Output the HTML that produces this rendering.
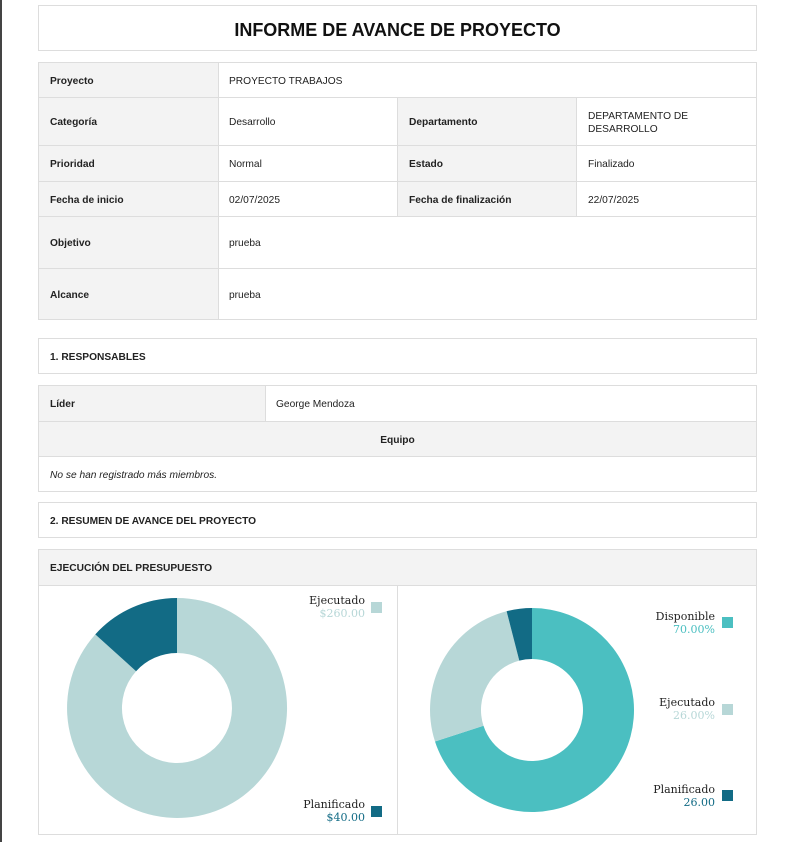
<!DOCTYPE html>
<html><head><meta charset="utf-8"><style>
*{margin:0;padding:0;box-sizing:border-box}
body{width:791px;height:842px;background:#fff;position:relative;overflow:hidden;font-family:"Liberation Sans",sans-serif;font-size:10.2px;color:#222}
.b{position:absolute;border:1px solid #ddd}
.c{position:absolute;display:flex;align-items:center;padding-left:11px;padding-top:3px;line-height:1.3}
.g{background:#f3f3f3}
.bold{font-weight:bold}
.l{position:absolute;background:#ddd}
</style></head><body>
<div style="position:absolute;left:0;top:0;width:2px;height:842px;background:#444"></div>
<div class="b" style="left:38px;top:5px;width:719px;height:46px;display:flex;align-items:center;justify-content:center;padding-top:4px;font-size:18px;font-weight:bold;color:#111">INFORME DE AVANCE DE PROYECTO</div>

<div class="b" style="left:38px;top:62px;width:719px;height:258px"></div>
<div class="c g bold" style="left:39px;top:63px;width:179px;height:34px">Proyecto</div>
<div class="c" style="left:218px;top:63px;width:300px;height:34px">PROYECTO TRABAJOS</div>
<div class="c g bold" style="left:39px;top:98px;width:179px;height:47px">Categoría</div>
<div class="c" style="left:218px;top:98px;width:179px;height:47px">Desarrollo</div>
<div class="c g bold" style="left:398px;top:98px;width:178px;height:47px">Departamento</div>
<div class="c" style="left:577px;top:98px;width:170px;height:47px">DEPARTAMENTO DE DESARROLLO</div>
<div class="c g bold" style="left:39px;top:146px;width:179px;height:35px">Prioridad</div>
<div class="c" style="left:218px;top:146px;width:179px;height:35px">Normal</div>
<div class="c g bold" style="left:398px;top:146px;width:178px;height:35px">Estado</div>
<div class="c" style="left:577px;top:146px;width:170px;height:35px">Finalizado</div>
<div class="c g bold" style="left:39px;top:182px;width:179px;height:34px">Fecha de inicio</div>
<div class="c" style="left:218px;top:182px;width:179px;height:34px">02/07/2025</div>
<div class="c g bold" style="left:398px;top:182px;width:178px;height:34px">Fecha de finalización</div>
<div class="c" style="left:577px;top:182px;width:170px;height:34px">22/07/2025</div>
<div class="c g bold" style="left:39px;top:217px;width:179px;height:51px">Objetivo</div>
<div class="c" style="left:218px;top:217px;width:300px;height:51px">prueba</div>
<div class="c g bold" style="left:39px;top:269px;width:179px;height:50px">Alcance</div>
<div class="c" style="left:218px;top:269px;width:300px;height:50px">prueba</div>
<div class="l" style="left:38px;top:97px;width:719px;height:1px"></div>
<div class="l" style="left:38px;top:145px;width:719px;height:1px"></div>
<div class="l" style="left:38px;top:181px;width:719px;height:1px"></div>
<div class="l" style="left:38px;top:216px;width:719px;height:1px"></div>
<div class="l" style="left:38px;top:268px;width:719px;height:1px"></div>
<div class="l" style="left:218px;top:62px;width:1px;height:258px"></div>
<div class="l" style="left:397px;top:97px;width:1px;height:119px"></div>
<div class="l" style="left:576px;top:97px;width:1px;height:119px"></div>

<div class="b c bold" style="left:38px;top:338px;width:719px;height:36px">1. RESPONSABLES</div>

<div class="b" style="left:38px;top:385px;width:719px;height:107px"></div>
<div class="c g bold" style="left:39px;top:386px;width:226px;height:35px">Líder</div>
<div class="c" style="left:265px;top:386px;width:300px;height:35px">George Mendoza</div>
<div class="c g bold" style="left:39px;top:422px;width:717px;height:34px;justify-content:center;padding-left:0">Equipo</div>
<div class="c" style="left:39px;top:457px;width:500px;height:34px;font-style:italic">No se han registrado más miembros.</div>
<div class="l" style="left:38px;top:421px;width:719px;height:1px"></div>
<div class="l" style="left:38px;top:456px;width:719px;height:1px"></div>
<div class="l" style="left:265px;top:385px;width:1px;height:36px"></div>

<div class="b c bold" style="left:38px;top:502px;width:719px;height:36px">2. RESUMEN DE AVANCE DEL PROYECTO</div>

<div class="b" style="left:38px;top:549px;width:719px;height:286px"></div>
<div class="c g bold" style="left:39px;top:550px;width:717px;height:35px">EJECUCIÓN DEL PRESUPUESTO</div>
<div class="l" style="left:38px;top:585px;width:719px;height:1px"></div>
<div class="l" style="left:397px;top:585px;width:1px;height:250px"></div>

<svg style="position:absolute;left:0;top:0" width="791" height="842" font-family="'DejaVu Serif','Liberation Serif',serif" font-size="11">
<path d="M177 598 A110 110 0 1 1 95.3 634.4 L136.1 671.2 A55 55 0 1 0 177 653 Z" fill="#b7d7d7"/>
<path d="M95.3 634.4 A110 110 0 0 1 177 598 L177 653 A55 55 0 0 0 136.1 671.2 Z" fill="#126b85"/>
<path d="M532 608 A102 102 0 1 1 435 741.5 L483.5 725.8 A51 51 0 1 0 532 659 Z" fill="#4bbfc1"/>
<path d="M435 741.5 A102 102 0 0 1 506.6 611.2 L519.3 660.6 A51 51 0 0 0 483.5 725.8 Z" fill="#b7d7d7"/>
<path d="M506.6 611.2 A102 102 0 0 1 532 608 L532 659 A51 51 0 0 0 519.3 660.6 Z" fill="#126b85"/>
<g text-anchor="end">
<text x="365" y="604" fill="#222">Ejecutado</text><text x="365" y="617" fill="#b7d7d7">$260.00</text>
<text x="365" y="808" fill="#222">Planificado</text><text x="365" y="821" fill="#126b85">$40.00</text>
<text x="715" y="620" fill="#222">Disponible</text><text x="715" y="633" fill="#4bbfc1">70.00%</text>
<text x="715" y="706" fill="#222">Ejecutado</text><text x="715" y="719" fill="#b7d7d7">26.00%</text>
<text x="715" y="793" fill="#222">Planificado</text><text x="715" y="806" fill="#126b85">26.00</text>
</g>
<rect x="371" y="602" width="11" height="11" fill="#b7d7d7"/>
<rect x="371" y="806" width="11" height="11" fill="#126b85"/>
<rect x="722" y="617" width="11" height="11" fill="#4bbfc1"/>
<rect x="722" y="704" width="11" height="11" fill="#b7d7d7"/>
<rect x="722" y="790" width="11" height="11" fill="#126b85"/>
</svg>
</body></html>
